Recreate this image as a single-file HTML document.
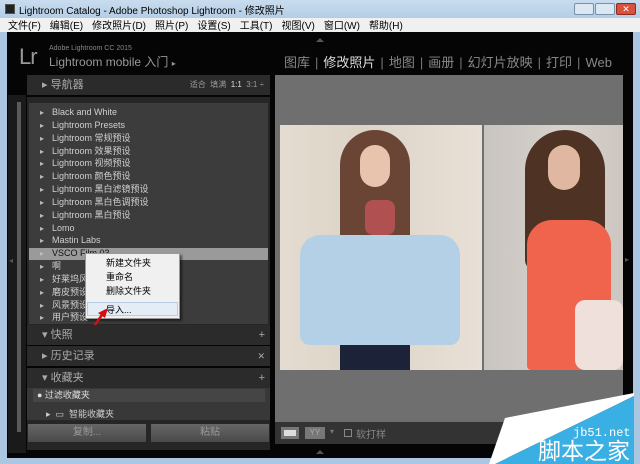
<!DOCTYPE html>
<html><head><meta charset="utf-8"><style>
*{margin:0;padding:0;box-sizing:border-box}
body{width:640px;height:464px;overflow:hidden;background:#aac6e0;font-family:"Liberation Sans","Noto Sans CJK SC",sans-serif;position:relative}
.a{position:absolute}
.t{font-size:11px;color:#000}
.menu span{margin-right:9px;font-size:10px}
.row{position:absolute;left:40px;font-size:9px;color:#d0d0d0;height:13px;line-height:13px}
.row:before{content:"▸";font-size:8px;color:#bbb;margin-right:8px}
.hd{position:absolute;left:27px;width:243px;height:20px;background:#2b2b2b;color:#aaa;font-size:11px;line-height:20px;padding-left:15px}
.nav span{color:#777;margin:0 5px}
</style></head><body>
<div class="a" style="left:0;top:0;width:640px;height:18px;background:linear-gradient(#c9dcee,#b4cde6)"></div>
<div class="a" style="left:5px;top:4px;width:10px;height:10px;background:#222;border:1px solid #555"></div>
<div class="a t" style="left:19px;top:2px;font-size:10px">Lightroom Catalog - Adobe Photoshop Lightroom - 修改照片</div>
<div class="a" style="left:574px;top:3px;width:20px;height:12px;background:#dbe7f3;border:1px solid #7890a8;border-radius:2px"></div>
<div class="a" style="left:595px;top:3px;width:20px;height:12px;background:#dbe7f3;border:1px solid #7890a8;border-radius:2px"></div>
<div class="a" style="left:616px;top:3px;width:20px;height:12px;background:#d9503c;border:1px solid #8a2a20;border-radius:2px;color:#fff;font-size:9px;text-align:center;line-height:10px">✕</div>
<div class="a menu" style="left:0;top:18px;width:640px;height:14px;background:#f0f0f0;padding-left:8px;line-height:14px"><span>文件(F)</span><span>编辑(E)</span><span>修改照片(D)</span><span>照片(P)</span><span>设置(S)</span><span>工具(T)</span><span>视图(V)</span><span>窗口(W)</span><span>帮助(H)</span></div>
<div class="a" style="left:7px;top:32px;width:626px;height:426px;background:#050505"></div>
<div class="a" style="left:316px;top:38px;width:0;height:0;border-left:4px solid transparent;border-right:4px solid transparent;border-bottom:4px solid #555"></div>
<div class="a" style="left:19px;top:44px;font-size:22px;color:#999;letter-spacing:-1px">Lr</div>
<div class="a" style="left:49px;top:45px;font-size:7px;color:#888">Adobe Lightroom CC 2015</div>
<div class="a" style="left:49px;top:53px;font-size:12px;color:#999">Lightroom mobile 入门 <span style="font-size:8px">▸</span></div>
<div class="a nav" style="left:284px;top:52px;font-size:13px;color:#888;white-space:nowrap">图库<span>|</span><b style="color:#ddd;font-weight:normal">修改照片</b><span>|</span>地图<span>|</span>画册<span>|</span>幻灯片放映<span>|</span>打印<span>|</span>Web</div>
<div class="a" style="left:8px;top:95px;width:18px;height:358px;background:#1a1a1a"></div>
<div class="a" style="left:17px;top:102px;width:4px;height:330px;background:#5a5a5a"></div>
<div class="a" style="left:9px;top:256px;font-size:8px;color:#555">◂</div>
<div class="hd" style="top:75px">▸ 导航器<span style="position:absolute;right:6px;font-size:8px;color:#999">适合 &nbsp;填满 &nbsp;<b style="color:#ddd;font-weight:normal">1:1</b> &nbsp;3:1 ÷</span></div>
<div class="a" style="left:27px;top:97px;width:243px;height:230px;background:#262626"></div>
<div class="a" style="left:29px;top:103px;width:239px;height:221px;background:#3c3c3c"></div>
<div class="row" style="top:106px">Black and White</div>
<div class="row" style="top:119px">Lightroom Presets</div>
<div class="row" style="top:132px">Lightroom 常规预设</div>
<div class="row" style="top:145px">Lightroom 效果预设</div>
<div class="row" style="top:157px">Lightroom 视频预设</div>
<div class="row" style="top:170px">Lightroom 颜色预设</div>
<div class="row" style="top:183px">Lightroom 黑白滤镜预设</div>
<div class="row" style="top:196px">Lightroom 黑白色调预设</div>
<div class="row" style="top:209px">Lightroom 黑白预设</div>
<div class="row" style="top:222px">Lomo</div>
<div class="row" style="top:234px">Mastin Labs</div>
<div class="a" style="left:29px;top:248px;width:239px;height:12px;background:#9a9a9a"></div>
<div class="row" style="top:247px;color:#111">VSCO Film 03</div>
<div class="row" style="top:260px">啊</div>
<div class="row" style="top:273px">好莱坞风格</div>
<div class="row" style="top:286px">磨皮预设</div>
<div class="row" style="top:299px">风景预设</div>
<div class="row" style="top:311px">用户预设</div>
<div class="a" style="left:85px;top:253px;width:95px;height:66px;background:#f0f0f0;border:1px solid #999;box-shadow:2px 2px 2px rgba(0,0,0,.5)"></div>
<div class="a" style="left:106px;top:256px;font-size:9px">新建文件夹</div>
<div class="a" style="left:106px;top:270px;font-size:9px">重命名</div>
<div class="a" style="left:106px;top:284px;font-size:9px">删除文件夹</div>
<div class="a" style="left:87px;top:302px;width:91px;height:14px;background:#e4ecf5;border:1px solid #b8cde5"></div>
<div class="a" style="left:106px;top:303px;font-size:9px">导入...</div>
<svg class="a" style="left:86px;top:306px" width="26" height="30"><path d="M4 26 L18 6" stroke="#d01010" stroke-width="2.5"/><path d="M22 2 L12 7 L19 12Z" fill="#d01010"/></svg>
<div class="hd" style="top:325px">▾ 快照<span style="position:absolute;right:5px">+</span></div>
<div class="hd" style="top:346px">▸ 历史记录<span style="position:absolute;right:5px;font-size:9px">✕</span></div>
<div class="hd" style="top:368px">▾ 收藏夹<span style="position:absolute;right:5px">+</span></div>
<div class="a" style="left:27px;top:388px;width:243px;height:32px;background:#383838"></div>
<div class="a" style="left:33px;top:389px;width:232px;height:13px;background:#454545;font-size:9px;color:#ddd;line-height:13px;padding-left:4px">● 过滤收藏夹</div>
<div class="a" style="left:46px;top:407px;font-size:9px;color:#ccc">▸ &nbsp;▭ &nbsp;智能收藏夹</div>
<div class="a" style="left:27px;top:420px;width:243px;height:30px;background:#262626"></div>
<div class="a" style="left:28px;top:424px;width:118px;height:18px;background:linear-gradient(#666,#4a4a4a);color:#999;font-size:10px;text-align:center;line-height:18px">复制...</div>
<div class="a" style="left:151px;top:424px;width:118px;height:18px;background:linear-gradient(#666,#4a4a4a);color:#999;font-size:10px;text-align:center;line-height:18px">粘贴</div>
<div class="a" style="left:275px;top:75px;width:348px;height:347px;background:#6f6f6f"></div>
<div class="a" style="left:280px;top:125px;width:202px;height:245px;background:linear-gradient(90deg,#e4dcd0,#ddd4c8 40%,#e8e0d6)"></div>
<div class="a" style="left:340px;top:130px;width:70px;height:140px;border-radius:35px 35px 10px 10px;background:#6a4434"></div>
<div class="a" style="left:360px;top:145px;width:30px;height:42px;border-radius:15px;background:#e8c4ae"></div>
<div class="a" style="left:300px;top:235px;width:160px;height:110px;border-radius:20px 20px 10px 10px;background:#b4d0e6"></div>
<div class="a" style="left:365px;top:200px;width:30px;height:35px;background:#b05050;border-radius:8px"></div>
<div class="a" style="left:340px;top:345px;width:70px;height:25px;background:#1c2238"></div>
<div class="a" style="left:484px;top:125px;width:139px;height:245px;background:linear-gradient(90deg,#c8c4c0,#d8d2cc 60%,#cdc6c0)"></div>
<div class="a" style="left:525px;top:130px;width:80px;height:140px;border-radius:40px 40px 10px 10px;background:#4e3224"></div>
<div class="a" style="left:548px;top:145px;width:32px;height:45px;border-radius:16px;background:#e0b8a2"></div>
<div class="a" style="left:527px;top:220px;width:84px;height:150px;border-radius:25px 25px 4px 4px;background:#f0634c"></div>
<div class="a" style="left:575px;top:300px;width:48px;height:70px;border-radius:10px;background:#efe0dc"></div>
<div class="a" style="left:625px;top:255px;font-size:8px;color:#555">▸</div>
<div class="a" style="left:275px;top:422px;width:348px;height:22px;background:#333"></div>
<div class="a" style="left:281px;top:427px;width:18px;height:12px;background:#ddd;border:3px solid #777"></div>
<div class="a" style="left:305px;top:427px;width:20px;height:12px;background:#777;color:#aaa;font-size:8px;line-height:12px;text-align:center">YY</div>
<div class="a" style="left:330px;top:427px;font-size:8px;color:#777">▾</div>
<div class="a" style="left:344px;top:429px;width:8px;height:8px;border:1px solid #888"></div>
<div class="a" style="left:356px;top:426px;font-size:10px;color:#888">软打样</div>
<div class="a" style="left:316px;top:450px;width:0;height:0;border-left:4px solid transparent;border-right:4px solid transparent;border-bottom:4px solid #555"></div>
<svg class="a" style="left:0;top:0" width="640" height="464"><path d="M505 418 L634 393 L634 396 L495 464 L489 464 Z" fill="#fff"/><path d="M634 396 L634 464 L495 464 Z" fill="#3aafe3"/></svg>
<div class="a" style="left:573px;top:426px;font-size:12px;color:#fff;font-family:'Liberation Mono',monospace;line-height:14px">jb51.net</div>
<div class="a" style="left:538px;top:438px;font-size:23px;color:#fff;line-height:26px;white-space:nowrap">脚本之家</div>
</body></html>
